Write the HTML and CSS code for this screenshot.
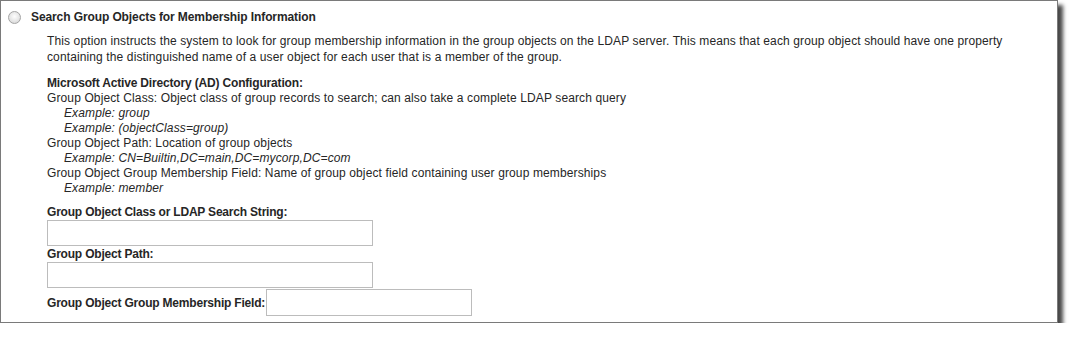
FILE: index.html
```html
<!DOCTYPE html>
<html lang="en">
  <head>
    <meta charset="UTF-8" />
    <title>Group Membership Settings</title>
    <link rel="stylesheet" href="styles.css">
  </head>
  <body>
    <div class="frame">
      <div class="option-head">
        <span class="radio"></span>
        <span class="option-title">Search Group Objects for Membership Information</span>
      </div>
      <div class="option-body">
        <p class="desc">
          This option instructs the system to look for group membership information in the group objects on the LDAP server. This means that each group object should have one property<br>
          containing the distinguished name of a user object for each user that is a member of the group.
        </p>
        <div class="config">
          <div class="config-title">Microsoft Active Directory (AD) Configuration:</div>
          <div>Group Object Class: Object class of group records to search; can also take a complete LDAP search query</div>
          <div class="example">Example: group</div>
          <div class="example">Example: (objectClass=group)</div>
          <div>Group Object Path: Location of group objects</div>
          <div class="example">Example: CN=Builtin,DC=main,DC=mycorp,DC=com</div>
          <div>Group Object Group Membership Field: Name of group object field containing user group memberships</div>
          <div class="example">Example: member</div>
        </div>
        <div class="fields">
          <label class="field-label" for="groupClass">Group Object Class or LDAP Search String:</label>
          <input class="text-input" id="groupClass" type="text" />
          <label class="field-label" for="groupPath">Group Object Path:</label>
          <input class="text-input" id="groupPath" type="text" />
          <div class="inline-field">
            <label class="field-label" for="groupField">Group Object Group Membership Field:</label>
            <input class="text-input short" id="groupField" type="text" />
          </div>
        </div>
      </div>
    </div>
  </body>
</html>
```

FILE: styles.css
```css
html,
body {
  margin: 0;
  padding: 0;
}

body {
  background: #fff;
  font-family: "Liberation Sans", Arial, sans-serif;
  font-size: 12px;
  letter-spacing: 0.12px;
  color: #262626;
}

.frame {
  box-sizing: border-box;
  width: 1058px;
  height: 323px;
  border: 1px solid #7a7a7a;
  box-shadow: 5px 5px 4px rgba(0, 0, 0, 0.72);
  background: #fff;
}

.option-head {
  display: flex;
  align-items: center;
  padding: 9px 0 0 7px;
  line-height: 15px;
}

.radio {
  box-sizing: border-box;
  width: 13px;
  height: 13px;
  border-radius: 50%;
  border: 1px solid #a4a4a4;
  background: radial-gradient(circle at 50% 40%, #fdfdfd 0%, #e6e6e6 55%, #cfcfcf 100%);
}

.option-title {
  font-weight: bold;
  letter-spacing: -0.1px;
  margin-left: 10px;
}

.option-body {
  padding-left: 46px;
}

.desc {
  margin: 8px 0 0;
  line-height: 16px;
}

.config {
  margin-top: 11px;
  line-height: 15px;
}

.config-title {
  font-weight: bold;
  letter-spacing: -0.17px;
}

.example {
  font-style: italic;
  padding-left: 17px;
}

.fields {
  margin-top: 8px;
  display: flex;
  flex-direction: column;
  align-items: flex-start;
}

.field-label {
  font-weight: bold;
  letter-spacing: -0.2px;
  line-height: 16px;
}

.text-input {
  box-sizing: border-box;
  width: 326px;
  height: 26px;
  margin: 0;
  border: 1px solid #bcbcbc;
  padding: 0 3px;
  font: inherit;
}

.inline-field {
  display: flex;
  align-items: center;
  gap: 1px;
  margin-top: 1px;
}

.text-input.short {
  width: 206px;
  height: 27px;
}
```
